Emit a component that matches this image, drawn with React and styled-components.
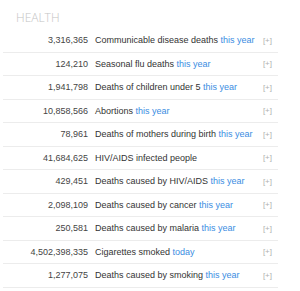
import React from 'react';
import styled, { createGlobalStyle } from 'styled-components';

const Global = createGlobalStyle`
    body {
        margin: 0;
        background: #fff;
        font-family: "Liberation Sans", Arial, sans-serif;
    }
`;

const Panel = styled.div`
    width: 275px;
    margin-left: 3px;
    padding-top: 9px;
`;

const Title = styled.h3`
    margin: 0 0 0 13px;
    height: 20px;
    font-size: 12px;
    font-weight: 300;
    font-family: "Open Sans", sans-serif;
    color: #c4c4c4;
    line-height: 17px;
`;

const Row = styled.div`
    display: grid;
    grid-template-columns: 85px 1fr auto;
    column-gap: 7px;
    align-items: center;
    height: 22.5px;
    border-bottom: 1px solid #ececec;
    font-size: 9px;
`;

const Count = styled.span`
    text-align: right;
    color: #444;
`;

const Label = styled.span`
    color: #333;
    white-space: nowrap;
`;

const Period = styled.span`
    color: #3b8de2;
`;

const More = styled.span`
    color: #b0b0b0;
    font-size: 8px;
    padding-right: 6px;
`;

const rows = [
    ['3,316,365', 'Communicable disease deaths', 'this year'],
    ['124,210', 'Seasonal flu deaths', 'this year'],
    ['1,941,798', 'Deaths of children under 5', 'this year'],
    ['10,858,566', 'Abortions', 'this year'],
    ['78,961', 'Deaths of mothers during birth', 'this year'],
    ['41,684,625', 'HIV/AIDS infected people', ''],
    ['429,451', 'Deaths caused by HIV/AIDS', 'this year'],
    ['2,098,109', 'Deaths caused by cancer', 'this year'],
    ['250,581', 'Deaths caused by malaria', 'this year'],
    ['4,502,398,335', 'Cigarettes smoked', 'today'],
    ['1,277,075', 'Deaths caused by smoking', 'this year'],
];

const App = () => (
    <Panel>
        <Global/>
        <Title>HEALTH</Title>
        {rows.map(([count, label, period]) => (
            <Row key={label}>
                <Count>{count}</Count>
                <Label>
                    {label}
                    {period && <> <Period>{period}</Period></>}
                </Label>
                <More>[+]</More>
            </Row>
        ))}
    </Panel>
);

export default App;
